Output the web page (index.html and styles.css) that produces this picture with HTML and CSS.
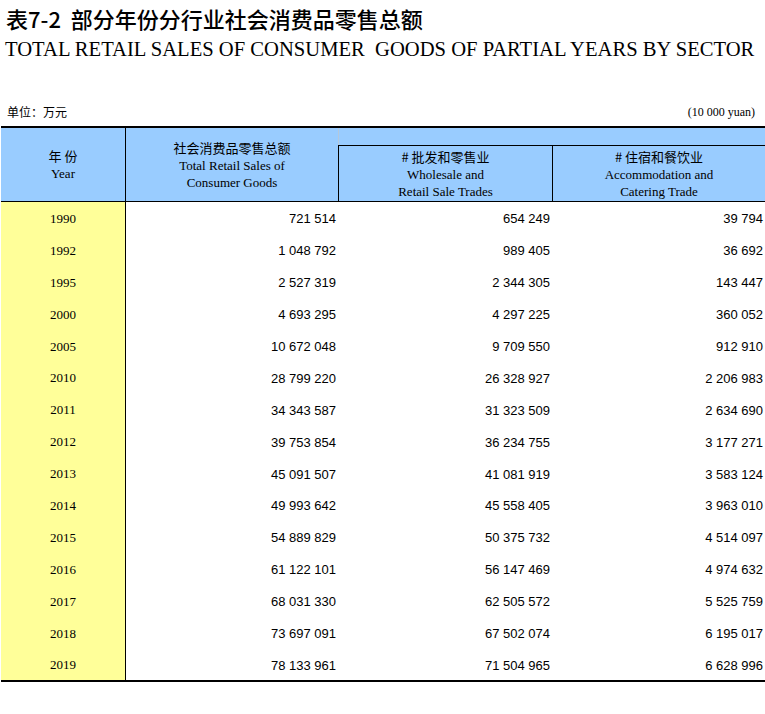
FILE: index.html
```html
<!DOCTYPE html>
<html lang="zh-CN">
<head>
<meta charset="utf-8">
<title>表7-2 部分年份分行业社会消费品零售总额</title>
<link rel="stylesheet" href="styles.css">
</head>
<body>
<div class="title-cn">表7-2&nbsp;&nbsp;部分年份分行业社会消费品零售总额</div>
<div class="title-en">TOTAL RETAIL SALES OF CONSUMER&nbsp; GOODS OF PARTIAL YEARS BY SECTOR</div>
<div class="unit-row">
  <span class="unit-cn">单位：万元</span>
  <span class="unit-en">(10 000 yuan)</span>
</div>
<table class="data">
  <colgroup>
    <col class="c1"><col class="c2"><col class="c3"><col class="c4">
  </colgroup>
  <thead>
    <tr class="h1">
      <th class="year-h" rowspan="2"><span class="cn">年 份</span><br>Year</th>
      <th class="total-h" rowspan="2"><span class="cn">社会消费品零售总额</span><br>Total Retail Sales of<br>Consumer Goods</th>
      <th class="blank-h" colspan="2"></th>
    </tr>
    <tr class="h2">
      <th class="ws-h"><span class="cn"># 批发和零售业</span><br>Wholesale and<br>Retail Sale Trades</th>
      <th class="acc-h"><span class="cn"># 住宿和餐饮业</span><br>Accommodation and<br>Catering Trade</th>
    </tr>
  </thead>
  <tbody>
    <tr><td class="yr">1990</td><td class="num">721 514</td><td class="num">654 249</td><td class="num">39 794</td></tr>
    <tr><td class="yr">1992</td><td class="num">1 048 792</td><td class="num">989 405</td><td class="num">36 692</td></tr>
    <tr><td class="yr">1995</td><td class="num">2 527 319</td><td class="num">2 344 305</td><td class="num">143 447</td></tr>
    <tr><td class="yr">2000</td><td class="num">4 693 295</td><td class="num">4 297 225</td><td class="num">360 052</td></tr>
    <tr><td class="yr">2005</td><td class="num">10 672 048</td><td class="num">9 709 550</td><td class="num">912 910</td></tr>
    <tr><td class="yr">2010</td><td class="num">28 799 220</td><td class="num">26 328 927</td><td class="num">2 206 983</td></tr>
    <tr><td class="yr">2011</td><td class="num">34 343 587</td><td class="num">31 323 509</td><td class="num">2 634 690</td></tr>
    <tr><td class="yr">2012</td><td class="num">39 753 854</td><td class="num">36 234 755</td><td class="num">3 177 271</td></tr>
    <tr><td class="yr">2013</td><td class="num">45 091 507</td><td class="num">41 081 919</td><td class="num">3 583 124</td></tr>
    <tr><td class="yr">2014</td><td class="num">49 993 642</td><td class="num">45 558 405</td><td class="num">3 963 010</td></tr>
    <tr><td class="yr">2015</td><td class="num">54 889 829</td><td class="num">50 375 732</td><td class="num">4 514 097</td></tr>
    <tr><td class="yr">2016</td><td class="num">61 122 101</td><td class="num">56 147 469</td><td class="num">4 974 632</td></tr>
    <tr><td class="yr">2017</td><td class="num">68 031 330</td><td class="num">62 505 572</td><td class="num">5 525 759</td></tr>
    <tr><td class="yr">2018</td><td class="num">73 697 091</td><td class="num">67 502 074</td><td class="num">6 195 017</td></tr>
    <tr><td class="yr">2019</td><td class="num">78 133 961</td><td class="num">71 504 965</td><td class="num">6 628 996</td></tr>
  </tbody>
</table>
</body>
</html>
```
FILE: styles.css
```css
html, body {
  margin: 0;
  padding: 0;
  background: #ffffff;
  color: #000000;
  overflow: hidden;
}

.title-cn {
  font-family: "Noto Sans CJK SC", "Noto Sans", sans-serif;
  font-size: 22px;
  font-weight: 500;
  line-height: 26px;
  padding: 5px 0 0 6px;
  white-space: nowrap;
}

.title-en {
  font-family: "Liberation Serif", "Times New Roman", serif;
  font-size: 20.6px;
  line-height: 26px;
  margin-top: 5px;
  padding-left: 5px;
  white-space: nowrap;
}

.unit-row {
  display: flex;
  justify-content: space-between;
  align-items: center;
  margin-top: 42px;
  padding: 0 10px 0 7px;
  height: 16px;
}

.unit-cn {
  font-family: "Noto Sans CJK SC", sans-serif;
  font-size: 12px;
  line-height: 16px;
}

.unit-en {
  font-family: "Liberation Serif", serif;
  font-size: 12px;
  line-height: 16px;
}

.data {
  margin: 6px 0 0 1px;
  width: 764px;
  table-layout: fixed;
  border-collapse: separate;
  border-spacing: 0;
  border-top: 2px solid #000;
  border-bottom: 2px solid #000;
}

.c1 { width: 125px; }
.c2 { width: 212px; }
.c3 { width: 214px; }
.c4 { width: 213px; }

.data th {
  background: #99ccff;
  font-family: "Liberation Serif", serif;
  font-weight: normal;
  font-size: 13px;
  line-height: 17px;
  padding: 0;
  text-align: center;
  vertical-align: middle;
}

.data th .cn {
  font-family: "Noto Sans CJK SC", sans-serif;
}

.year-h {
  border-right: 1px solid #000;
  border-bottom: 1px solid #000;
}

.total-h {
  border-bottom: 1px solid #000;
}

.h1 .blank-h {
  height: 17px;
  border-left: 1px solid #b4c8dc;
}

.h2 th {
  height: 55px;
  border-top: 1px solid #000;
  border-bottom: 1px solid #000;
}

.ws-h {
  border-left: 1px solid #000;
}

.acc-h {
  border-left: 1px solid #000;
}

.data tbody tr {
  height: 31.9px;
}

.data td {
  padding: 2px 0 0 0;
  vertical-align: middle;
}

.yr {
  background: #ffff99;
  border-right: 1px solid #000;
  text-align: center;
  font-family: "Liberation Serif", serif;
  font-size: 13px;
}

.data td.num {
  text-align: right;
  padding-right: 2px;
  font-family: "Liberation Sans", sans-serif;
  font-size: 13px;
}
```
